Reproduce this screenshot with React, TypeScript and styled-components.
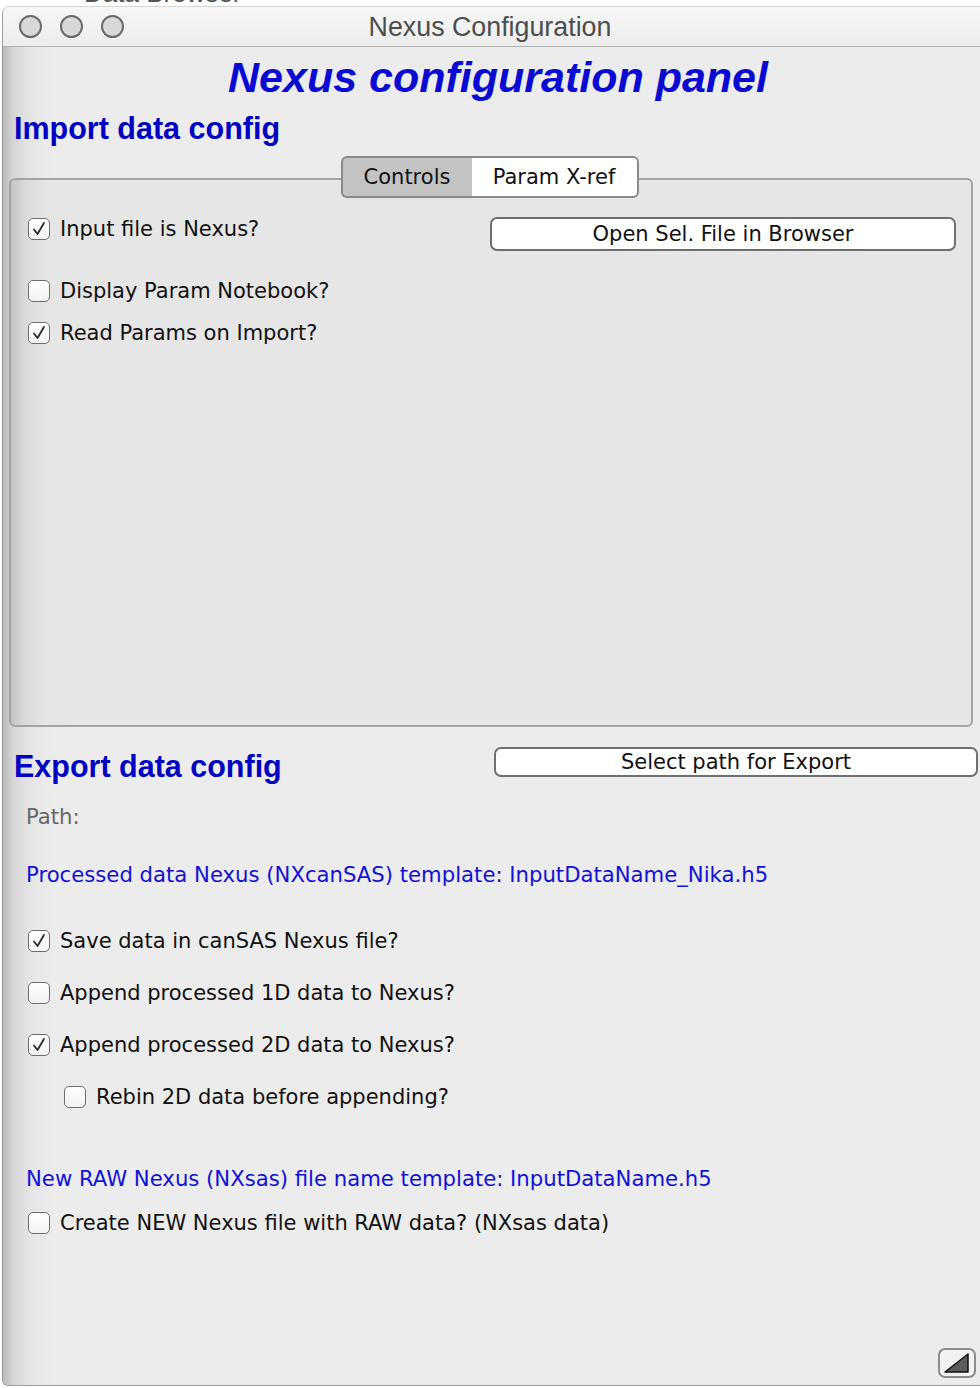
import { createGlobalStyle } from "styled-components";
import styled from "styled-components";

const GlobalStyle = createGlobalStyle`
  html, body {
    margin: 0;
    padding: 0;
    background: #ffffff;
    overflow: hidden;
  }
  body {
    font-family: "DejaVu Sans", "Liberation Sans", sans-serif;
  }
`;

interface CheckProps {
  label: string;
  checked?: boolean;
  indent?: number;
}

const CheckRow = ({ label, checked, indent = 0 }: CheckProps) => {
  return (
    <CheckLabel $indent={indent}>
      <Box>
        {checked && (
          <svg width="16" height="16" viewBox="0 0 16 16">
            <polyline points="3,8.5 6.5,13 13,2" fill="none" stroke="#2a2a2a" strokeWidth="1.8" strokeLinejoin="round" strokeLinecap="round" />
          </svg>
        )}
      </Box>
      <span>{label}</span>
    </CheckLabel>
  );
};

const App = () => {
  return (
    <Desktop>
      <GlobalStyle />
      <TopPeek>
        <span>Data Browser</span>
      </TopPeek>
      <Window>
        <TitleBar>
          <Lights>
            <Light />
            <Light />
            <Light />
          </Lights>
          <WindowTitle>Nexus Configuration</WindowTitle>
          <div />
        </TitleBar>
        <Body>
          <MainHeading>Nexus configuration panel</MainHeading>
          <SectionHeading>Import data config</SectionHeading>
          <Tabs>
            <Tab $active>Controls</Tab>
            <Tab>Param X-ref</Tab>
          </Tabs>
          <Panel>
            <PanelGrid>
              <LeftColumn>
                <CheckRow label="Input file is Nexus?" checked />
                <Spaced $top={38}>
                  <CheckRow label="Display Param Notebook?" />
                </Spaced>
                <Spaced $top={18}>
                  <CheckRow label="Read Params on Import?" checked />
                </Spaced>
              </LeftColumn>
              <Button $height={34}>Open Sel. File in Browser</Button>
            </PanelGrid>
          </Panel>
          <ExportRow>
            <SectionHeading as="div">Export data config</SectionHeading>
            <Button $height={30}>Select path for Export</Button>
          </ExportRow>
          <ExportBody>
            <InfoLine $tone="gray" $top={20}>
              Path:
            </InfoLine>
            <InfoLine $tone="blue" $top={32}>
              Processed data Nexus (NXcanSAS) template: InputDataName_Nika.h5
            </InfoLine>
            <Spaced $top={41}>
              <CheckRow label="Save data in canSAS Nexus file?" checked />
            </Spaced>
            <Spaced $top={28}>
              <CheckRow label="Append processed 1D data to Nexus?" />
            </Spaced>
            <Spaced $top={28}>
              <CheckRow label="Append processed 2D data to Nexus?" checked />
            </Spaced>
            <Spaced $top={28}>
              <CheckRow label="Rebin 2D data before appending?" indent={36} />
            </Spaced>
            <InfoLine $tone="blue" $top={57}>
              New RAW Nexus (NXsas) file name template: InputDataName.h5
            </InfoLine>
            <Spaced $top={19}>
              <CheckRow label="Create NEW Nexus file with RAW data? (NXsas data)" />
            </Spaced>
          </ExportBody>
          <Footer>
            <Grip>
              <svg width="28" height="22" viewBox="0 0 28 22">
                <polygon points="2,20 25,2 25,20" fill="#5a5a5a" stroke="#111" strokeWidth="1.5" strokeLinejoin="round" />
              </svg>
            </Grip>
          </Footer>
        </Body>
      </Window>
    </Desktop>
  );
};

export default App;

const Desktop = styled.div`
  width: 980px;
  height: 1388px;
  overflow: hidden;
  background: #ffffff;
`;

const TopPeek = styled.div`
  height: 6px;
  overflow: hidden;
  padding-left: 84px;
  span {
    display: block;
    margin-top: -20px;
    font-family: "Liberation Sans", sans-serif;
    font-size: 26px;
    line-height: 26px;
    color: #555;
  }
`;

const Window = styled.div`
  margin-left: 2px;
  width: 990px;
  height: 1379px;
  border-left: 1px solid #9c9c9c;
  border-bottom: 1px solid #9c9c9c;
  border-radius: 8px 0 0 6px;
  overflow: hidden;
  display: flex;
  flex-direction: column;
  background: #ececec;
`;

const TitleBar = styled.div`
  height: 39px;
  flex: none;
  display: grid;
  grid-template-columns: 1fr auto 1fr;
  align-items: center;
  border-top: 1px solid #d6d6d6;
  border-bottom: 1px solid #b2b2b2;
  background: linear-gradient(#f7f7f7, #ececec);
  padding-right: 10px;
`;

const Lights = styled.div`
  display: flex;
  gap: 18px;
  padding-left: 16px;
`;

const Light = styled.span`
  width: 19px;
  height: 19px;
  border-radius: 50%;
  border: 2px solid #6b6b6b;
  background: #d8d8d8;
`;

const WindowTitle = styled.div`
  padding-top: 2px;
  padding-right: 6px;
  font-family: "Liberation Sans", sans-serif;
  font-size: 26.8px;
  color: #4d4d4d;
`;

const Body = styled.div`
  flex: 1;
  display: flex;
  flex-direction: column;
  background: linear-gradient(to right, #b9b9b9 0px, #d6d6d6 10px, #e6e6e6 28px, #ececec 50px);
`;

const MainHeading = styled.h1`
  margin: 7px 0 0;
  width: 980px;
  text-align: center;
  padding-left: 10px;
  box-sizing: border-box;
  font-family: "Liberation Sans", sans-serif;
  font-style: italic;
  font-weight: 700;
  font-size: 43px;
  line-height: 46px;
  color: #0a0ad2;
`;

const SectionHeading = styled.h2`
  margin: 10px 0 0;
  padding-left: 11px;
  font-family: "Liberation Sans", sans-serif;
  font-weight: 700;
  font-size: 30.5px;
  line-height: 36px;
  color: #0000c2;
`;

const Tabs = styled.div`
  position: relative;
  z-index: 1;
  width: 980px;
  margin-top: 10px;
  margin-bottom: -20px;
  padding-right: 7px;
  display: flex;
  justify-content: center;
  box-sizing: border-box;
`;

const Tab = styled.div<{ $active?: boolean }>`
  height: 42px;
  box-sizing: border-box;
  display: flex;
  align-items: center;
  justify-content: center;
  font-size: 21px;
  color: #111;
  border: 2px solid #8a8a8a;
  background: ${({ $active }) => ($active ? "#c3c3c3" : "#ffffff")};
  width: ${({ $active }) => ($active ? "131px" : "167px")};
  border-radius: ${({ $active }) => ($active ? "6px 0 0 6px" : "0 6px 6px 0")};
  ${({ $active }) => ($active ? "border-right: none;" : "border-left: none;")}
`;

const Panel = styled.div`
  margin-left: 6px;
  width: 964px;
  height: 549px;
  box-sizing: border-box;
  border: 2px solid #a4a4a4;
  border-radius: 6px;
  background: linear-gradient(to right, #c4c4c4 0px, #dadada 14px, #e5e5e5 34px, #e6e6e6 60px);
`;

const PanelGrid = styled.div`
  display: grid;
  grid-template-columns: 462px 466px;
  padding: 37px 0 0 17px;
`;

const LeftColumn = styled.div`
  display: flex;
  flex-direction: column;
`;

const Spaced = styled.div<{ $top: number }>`
  margin-top: ${({ $top }) => $top}px;
`;

const CheckLabel = styled.label<{ $indent: number }>`
  display: flex;
  align-items: center;
  gap: 10px;
  height: 24px;
  padding-left: ${({ $indent }) => $indent}px;
  font-size: 21px;
  color: #111;
  white-space: nowrap;
`;

const Box = styled.span`
  width: 22px;
  height: 22px;
  box-sizing: border-box;
  flex: none;
  border: 1.5px solid #6e6e6e;
  border-radius: 5px;
  background: linear-gradient(#ffffff, #f2f2f2);
  display: flex;
  align-items: center;
  justify-content: center;
`;

const Button = styled.button<{ $height: number }>`
  height: ${({ $height }) => $height}px;
  box-sizing: border-box;
  border: 2px solid #6f6f6f;
  border-radius: 7px;
  background: #ffffff;
  font-family: "DejaVu Sans", sans-serif;
  font-size: 21px;
  color: #111;
  padding: 0;
  line-height: 1;
`;

const ExportRow = styled.div`
  margin-top: 20px;
  display: grid;
  grid-template-columns: 491px 484px;
  align-items: start;
  & > div {
    margin-top: 1px;
  }
`;

const ExportBody = styled.div`
  display: flex;
  flex-direction: column;
  padding-left: 25px;
`;

const InfoLine = styled.div<{ $tone: "gray" | "blue"; $top: number }>`
  margin-top: ${({ $top }) => $top}px;
  margin-left: -2px;
  font-size: 21.2px;
  line-height: 26px;
  color: ${({ $tone }) => ($tone === "blue" ? "#1111d6" : "#666666")};
  white-space: nowrap;
`;

const Footer = styled.div`
  margin-top: auto;
  width: 980px;
  display: flex;
  justify-content: flex-end;
  padding: 0 7px 7px 0;
  box-sizing: border-box;
`;

const Grip = styled.div`
  width: 38px;
  height: 30px;
  box-sizing: border-box;
  border: 2px solid #8c8c8c;
  border-radius: 7px;
  background: #f2f2f2;
  display: flex;
  align-items: center;
  justify-content: center;
`;
